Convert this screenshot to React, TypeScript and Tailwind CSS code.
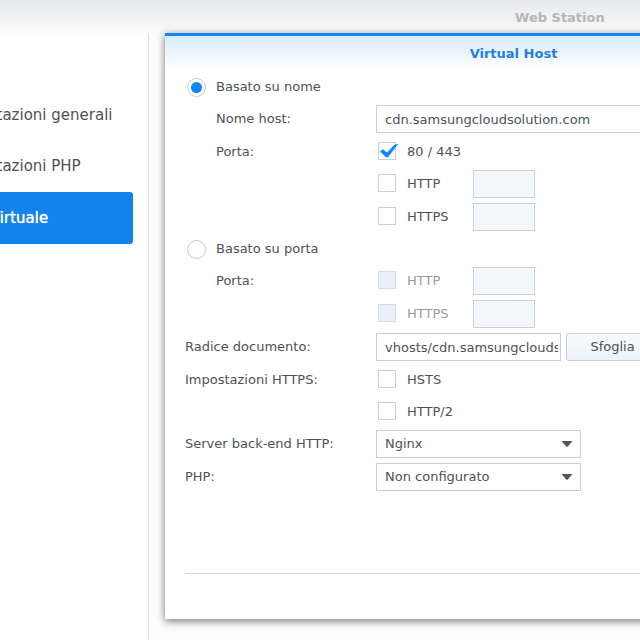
import type { ReactNode } from "react";

const navItems = [
  { label: "Impostazioni generali", active: false },
  { label: "Impostazioni PHP", active: false },
  { label: "Host Virtuale", active: true },
];

const Row = ({
  label,
  htmlFor,
  indent,
  short,
  children,
}: {
  label?: string;
  htmlFor?: string;
  indent?: boolean;
  short?: boolean;
  children: ReactNode;
}) => (
  <div className={short ? "flex h-[27px] items-center" : "flex h-7 items-center"}>
    <label
      htmlFor={htmlFor}
      className={indent ? "w-[191px] shrink-0 pl-[31px]" : "w-[191px] shrink-0"}
    >
      {label}
    </label>
    {children}
  </div>
);

const RadioRow = ({
  id,
  label,
  defaultChecked,
}: {
  id: string;
  label: string;
  defaultChecked?: boolean;
}) => (
  <div className="flex h-[26px] items-center">
    <input
      type="radio"
      name="mode"
      id={id}
      defaultChecked={defaultChecked}
      className="ml-0.5 grid size-[19px] shrink-0 appearance-none place-items-center rounded-full border border-[#c6ccd6] bg-white before:size-[11px] before:rounded-full checked:before:bg-[#0f86f5]"
    />
    <label htmlFor={id} className="pl-2.5">
      {label}
    </label>
  </div>
);

const Check = ({
  id,
  label,
  defaultChecked,
  disabled,
}: {
  id: string;
  label: string;
  defaultChecked?: boolean;
  disabled?: boolean;
}) => (
  <div className="flex w-[97px] shrink-0 items-center pl-0.5">
    <span className="relative mb-0.5 size-[18px] shrink-0">
      <input
        type="checkbox"
        id={id}
        defaultChecked={defaultChecked}
        disabled={disabled}
        className="peer block size-[18px] appearance-none border border-[#c6d0da] bg-white disabled:border-[#d3dbe5] disabled:bg-[#ebf0f8]"
      />
      <svg
        viewBox="0 0 20 16"
        className="pointer-events-none absolute top-0.5 left-0.5 hidden h-4 w-5 peer-checked:block"
      >
        <path
          d="M0 7.4 L2.8 5.2 L7 8.6 L14.8 0.6 L18.2 0 L8 13.2 H6 Z"
          fill="#0f86f5"
        />
      </svg>
    </span>
    <label
      htmlFor={id}
      className={disabled ? "pl-[11px] text-[#969ba0]" : "pl-[11px]"}
    >
      {label}
    </label>
  </div>
);

const PortInput = ({ label }: { label: string }) => (
  <input
    type="text"
    aria-label={label}
    disabled
    className="h-7 w-[62px] border border-[#c6d0da] bg-[#f5f8fb] px-2"
  />
);

const Select = ({ id, value }: { id: string; value: string }) => (
  <div className="relative">
    <select
      id={id}
      className="block h-7 w-[205px] appearance-none border border-[#c6d0da] bg-white px-2"
    >
      <option>{value}</option>
    </select>
    <svg
      viewBox="0 0 12 6"
      className="pointer-events-none absolute top-[11px] right-2 h-1.5 w-3"
    >
      <path d="M0.5 0 H11.5 L6.8 5.5 Q6 6 5.2 5.5 Z" fill="#50575e" />
    </svg>
  </div>
);

const App = () => {
  return (
    <div className="flex min-h-screen flex-col overflow-hidden bg-white font-['DejaVu_Sans',Verdana,sans-serif] text-[13px] text-[#4b5258]">
      <header className="h-[33px] bg-linear-to-b from-[#e6e8ee] to-[#fbfbfb] pl-[515px]">
        <h1 className="pt-2 text-[13px] leading-5 font-bold whitespace-nowrap text-[#b4b6b9]">
          Web Station
        </h1>
      </header>
      <div className="flex flex-1">
        <nav className="mt-px w-[149px] shrink-0 border-r border-[#dcdcdc] pt-14 pr-[15px]">
          {navItems.map((item) => (
            <a
              key={item.label}
              href="#"
              className={
                item.active
                  ? "-ml-16 flex h-[52px] items-center rounded-[3px] bg-[#1283ec] pl-[15px] text-[15px] whitespace-nowrap text-white [text-shadow:0_0_1px_#fff]"
                  : "-ml-16 flex h-[51px] items-center pl-[15px] text-[15px] whitespace-nowrap"
              }
            >
              {item.label}
            </a>
          ))}
        </nav>
        <main className="min-w-0 flex-1 bg-[#fdfdfd] pl-4">
          <section className="w-[697px] border-t-3 border-[#1484ee] bg-white shadow-[0_2px_8px_rgba(0,0,0,0.55)]">
            <h2 className="h-[38px] bg-linear-to-b from-[#d9ebfb] to-white to-90% pt-2 text-center text-[13px] leading-5 font-bold text-[#1f7eea]">
              Virtual Host
            </h2>
            <form className="px-5 pb-[45px]">
              <div className="flex flex-col gap-[5px] border-b border-[#d5d5d5] pb-[82px]">
                <RadioRow id="by-name" label="Basato su nome" defaultChecked />
                <Row label="Nome host:" htmlFor="hostname" indent>
                  <input
                    type="text"
                    id="hostname"
                    defaultValue="cdn.samsungcloudsolution.com"
                    className="h-7 w-[445px] border border-[#c6d0da] bg-white px-2"
                  />
                </Row>
                <Row label="Porta:" htmlFor="default-ports" indent short>
                  <Check id="default-ports" label="80 / 443" defaultChecked />
                </Row>
                <Row>
                  <Check id="name-http" label="HTTP" />
                  <PortInput label="Porta HTTP" />
                </Row>
                <Row>
                  <Check id="name-https" label="HTTPS" />
                  <PortInput label="Porta HTTPS" />
                </Row>
                <RadioRow id="by-port" label="Basato su porta" />
                <Row label="Porta:" htmlFor="port-http" indent>
                  <Check id="port-http" label="HTTP" disabled />
                  <PortInput label="Porta HTTP" />
                </Row>
                <Row>
                  <Check id="port-https" label="HTTPS" disabled />
                  <PortInput label="Porta HTTPS" />
                </Row>
                <Row label="Radice documento:" htmlFor="root-dir">
                  <input
                    type="text"
                    id="root-dir"
                    defaultValue="vhosts/cdn.samsungcloudsolution.com"
                    className="h-7 w-[185px] border border-[#c6d0da] bg-white pr-0.5 pl-2"
                  />
                  <button
                    type="button"
                    className="ml-[5px] h-7 w-[93px] rounded-[3px] border border-[#c6d0da] bg-linear-to-b from-[#f8fafd] to-[#edf3f9]"
                  >
                    Sfoglia
                  </button>
                </Row>
                <Row label="Impostazioni HTTPS:" htmlFor="hsts" short>
                  <Check id="hsts" label="HSTS" />
                </Row>
                <Row short>
                  <Check id="http2" label="HTTP/2" />
                </Row>
                <Row label="Server back-end HTTP:" htmlFor="backend">
                  <Select id="backend" value="Nginx" />
                </Row>
                <Row label="PHP:" htmlFor="php">
                  <Select id="php" value="Non configurato" />
                </Row>
              </div>
            </form>
          </section>
        </main>
      </div>
    </div>
  );
};

export default App;
